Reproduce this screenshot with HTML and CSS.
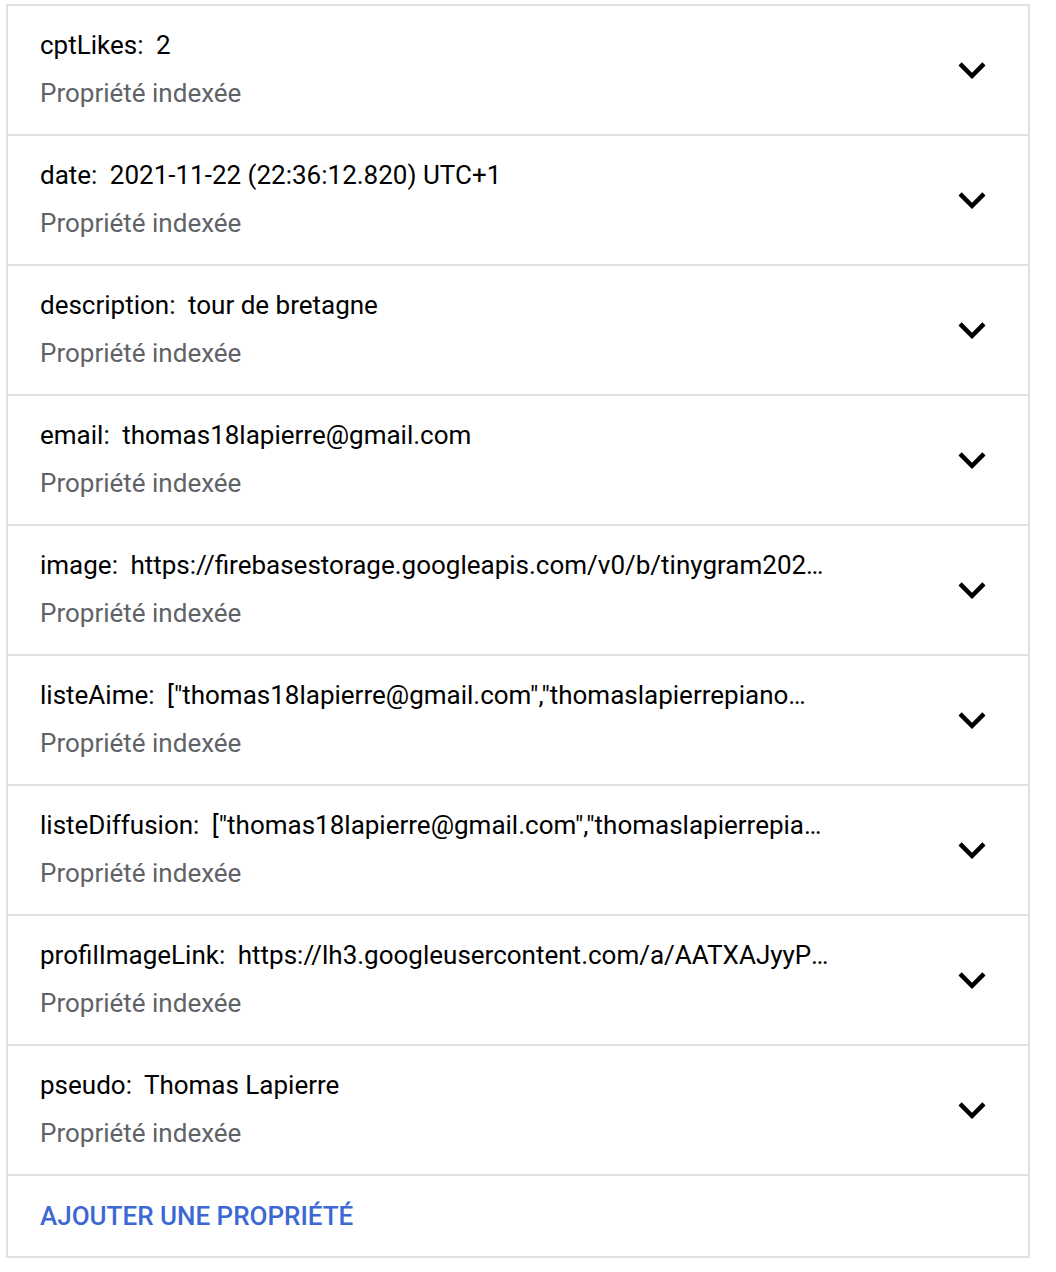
FILE: index.html
```html
<!DOCTYPE html>
<html lang="fr">
<head>
<meta charset="utf-8">
<title>Propriétés</title>
<link rel="stylesheet" href="styles.css">
</head>
<body>
<div class="panel">
  <div class="row">
    <div class="info">
      <div class="line"><span class="key">cptLikes:</span> <span class="val">2</span></div>
      <div class="sub">Propriété indexée</div>
    </div>
    <svg class="chev" viewBox="0 0 24 24"><path d="M16.59 8.59L12 13.17 7.41 8.59 6 10l6 6 6-6z"/></svg>
  </div>
  <div class="row">
    <div class="info">
      <div class="line"><span class="key">date:</span> <span class="val">2021-11-22 (22:36:12.820) UTC+1</span></div>
      <div class="sub">Propriété indexée</div>
    </div>
    <svg class="chev" viewBox="0 0 24 24"><path d="M16.59 8.59L12 13.17 7.41 8.59 6 10l6 6 6-6z"/></svg>
  </div>
  <div class="row">
    <div class="info">
      <div class="line"><span class="key">description:</span> <span class="val">tour de bretagne</span></div>
      <div class="sub">Propriété indexée</div>
    </div>
    <svg class="chev" viewBox="0 0 24 24"><path d="M16.59 8.59L12 13.17 7.41 8.59 6 10l6 6 6-6z"/></svg>
  </div>
  <div class="row">
    <div class="info">
      <div class="line"><span class="key">email:</span> <span class="val">thomas18lapierre@gmail.com</span></div>
      <div class="sub">Propriété indexée</div>
    </div>
    <svg class="chev" viewBox="0 0 24 24"><path d="M16.59 8.59L12 13.17 7.41 8.59 6 10l6 6 6-6z"/></svg>
  </div>
  <div class="row">
    <div class="info">
      <div class="line"><span class="key">image:</span> <span class="val">https://firebasestorage.googleapis.com/v0/b/tinygram2021-332512.appspot.com/o/images</span></div>
      <div class="sub">Propriété indexée</div>
    </div>
    <svg class="chev" viewBox="0 0 24 24"><path d="M16.59 8.59L12 13.17 7.41 8.59 6 10l6 6 6-6z"/></svg>
  </div>
  <div class="row">
    <div class="info">
      <div class="line"><span class="key">listeAime:</span> <span class="val">["thomas18lapierre@gmail.com","thomaslapierrepiano@gmail.com"]</span></div>
      <div class="sub">Propriété indexée</div>
    </div>
    <svg class="chev" viewBox="0 0 24 24"><path d="M16.59 8.59L12 13.17 7.41 8.59 6 10l6 6 6-6z"/></svg>
  </div>
  <div class="row">
    <div class="info">
      <div class="line"><span class="key">listeDiffusion:</span> <span class="val">["thomas18lapierre@gmail.com","thomaslapierrepiano@gmail.com"]</span></div>
      <div class="sub">Propriété indexée</div>
    </div>
    <svg class="chev" viewBox="0 0 24 24"><path d="M16.59 8.59L12 13.17 7.41 8.59 6 10l6 6 6-6z"/></svg>
  </div>
  <div class="row">
    <div class="info">
      <div class="line"><span class="key">profilImageLink:</span> <span class="val">https://lh3.googleusercontent.com/a/AATXAJyyPqT5x8</span></div>
      <div class="sub">Propriété indexée</div>
    </div>
    <svg class="chev" viewBox="0 0 24 24"><path d="M16.59 8.59L12 13.17 7.41 8.59 6 10l6 6 6-6z"/></svg>
  </div>
  <div class="row">
    <div class="info">
      <div class="line"><span class="key">pseudo:</span> <span class="val">Thomas Lapierre</span></div>
      <div class="sub">Propriété indexée</div>
    </div>
    <svg class="chev" viewBox="0 0 24 24"><path d="M16.59 8.59L12 13.17 7.41 8.59 6 10l6 6 6-6z"/></svg>
  </div>
  <div class="footer">
    <span class="add">AJOUTER UNE PROPRIÉTÉ</span>
  </div>
</div>
</body>
</html>
```
FILE: styles.css
```css
html, body {
  margin: 0;
  padding: 0;
  background: #ffffff;
}
body {
  font-family: Roboto, "Liberation Sans", Arial, sans-serif;
  color: #202124;
}
.panel {
  margin: 4px 0 0 6px;
  width: 1020px;
  border: 2px solid #e0e0e0;
}
.row {
  height: 128px;
  border-bottom: 2px solid #e0e0e0;
  display: flex;
  align-items: center;
  padding: 0 29px 0 32px;
}
.info {
  flex: 1;
  min-width: 0;
  display: flex;
  flex-direction: column;
  padding-right: 116.5px;
  padding-bottom: 2px;
}
.line, .sub {
  font-size: 26px;
  line-height: 48px;
  white-space: nowrap;
  overflow: hidden;
  text-overflow: ellipsis;
}
.line {
  color: #000000;
}
.key {
  margin-right: 6px;
}
.sub {
  color: #5f6368;
}
.chev {
  width: 54px;
  height: 54px;
  flex: none;
  fill: #000000;
}
.footer {
  height: 80px;
  display: flex;
  align-items: center;
  padding-left: 32px;
}
.add {
  font-size: 26px;
  font-weight: 500;
  color: #3b68d4;
}
```
